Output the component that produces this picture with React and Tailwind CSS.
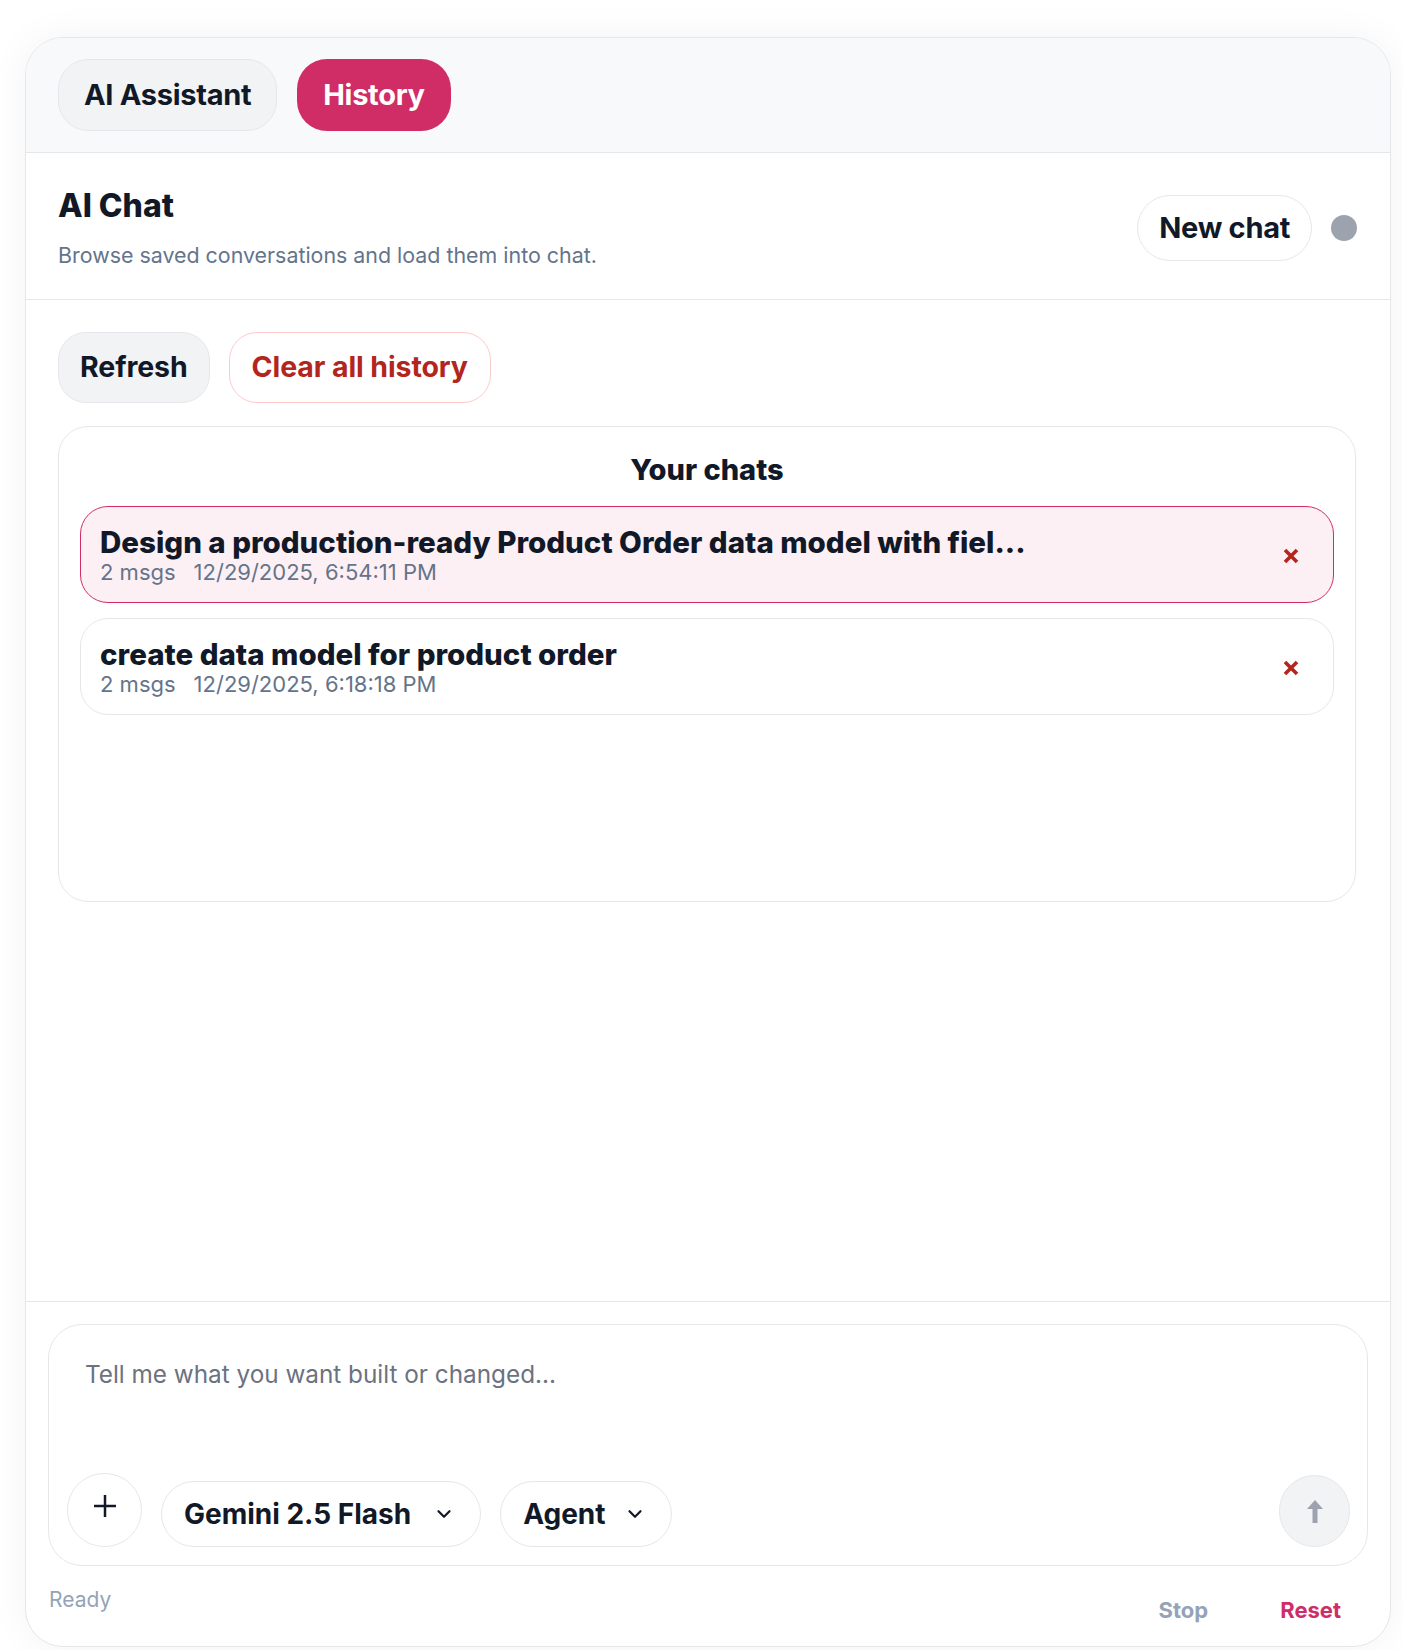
import React from "react";
import { ChevronDown } from "lucide-react";

const chats = [
  {
    title: "Design a production-ready Product Order data model with fiel...",
    count: "2 msgs",
    date: "12/29/2025, 6:54:11 PM",
    active: true,
  },
  {
    title: "create data model for product order",
    count: "2 msgs",
    date: "12/29/2025, 6:18:18 PM",
    active: false,
  },
];

const CloseIcon = () => (
  <svg width="18" height="18" viewBox="0 0 18 18" className="text-[#b3261e]">
    <path d="M3 3 15 15M15 3 3 15" stroke="currentColor" strokeWidth="3.6" strokeLinecap="butt" />
  </svg>
);

const ChatRow = ({ chat }) => (
  <div
    className={`flex items-center justify-between rounded-[28px] border pl-[19px] pr-[33px] pt-[18px] pb-[16px] ${
      chat.active ? "border-[#d02d66] bg-[#fdf0f4]" : "border-[#e5e7eb] bg-white"
    }`}
  >
    <div className="flex flex-col">
      <span className="text-[29.5px] leading-[34px] font-extrabold text-[#111827]">
        {chat.title}
      </span>
      <div className="flex gap-x-[18px] text-[22px] leading-[27px] text-[#64748b]">
        <span>{chat.count}</span>
        <span>{chat.date}</span>
      </div>
    </div>
    <button className="flex items-center justify-center">
      <CloseIcon />
    </button>
  </div>
);

export default function App() {
  return (
    <div
      className="min-h-[1650px] bg-white pt-[37px] pl-[25px]"
      style={{ fontFamily: "Inter, 'Noto Sans', sans-serif" }}
    >
      <div className="flex h-[1610px] w-[1366px] flex-col overflow-hidden rounded-[38px] border border-[#e5e7eb] bg-white shadow-[0_0_40px_rgba(0,0,0,0.05)]">
        {/* tabs */}
        <div className="flex h-[115px] shrink-0 items-center gap-x-[20px] border-b border-[#e5e7eb] bg-[#f8f9fb] px-[32px]">
          <button className="h-[72px] rounded-[30px] border border-[#e5e7eb] bg-[#f2f3f5] px-[25px] text-[29px] font-bold tracking-[-0.3px] text-[#111827]">
            AI Assistant
          </button>
          <button className="h-[72px] rounded-[30px] bg-[#d02d66] px-[26px] text-[29px] font-bold tracking-[-0.3px] text-white">
            History
          </button>
        </div>

        {/* title */}
        <div className="flex shrink-0 items-center justify-between border-b border-[#e5e7eb] pl-[32px] pr-[33px] pt-[33px] pb-[29px]">
          <div className="flex flex-col">
            <h1 className="text-[32px] leading-[40px] font-extrabold text-[#111827]">AI Chat</h1>
            <p className="mt-[14px] text-[21.4px] leading-[30px] text-[#64748b]">
              Browse saved conversations and load them into chat.
            </p>
          </div>
          <div className="flex items-center gap-x-[19px]">
            <button className="h-[66px] rounded-full border border-[#e5e7eb] bg-white px-[21px] text-[29px] font-bold tracking-[-0.3px] text-[#111827]">
              New chat
            </button>
            <span className="h-[26px] w-[26px] rounded-full bg-[#9ca3af]" />
          </div>
        </div>

        {/* history */}
        <div className="flex flex-1 flex-col border-b border-[#e5e7eb] pl-[32px] pr-[34px] pt-[32px]">
          <div className="flex gap-x-[19px]">
            <button className="h-[71px] rounded-[28px] border border-[#e5e7eb] bg-[#f2f3f5] px-[21px] text-[28.5px] font-bold tracking-[-0.1px] text-[#111827]">
              Refresh
            </button>
            <button className="h-[71px] rounded-[28px] border border-[#fecaca] bg-white px-[22px] text-[28.5px] font-bold tracking-[-0.1px] text-[#b3261e]">
              Clear all history
            </button>
          </div>

          <div className="mt-[23px] flex h-[476px] flex-col rounded-[30px] border border-[#e5e7eb] bg-white px-[21px] pt-[25px]">
            <h2 className="text-center text-[29px] leading-[36px] font-extrabold text-[#111827]">Your chats</h2>
            <div className="mt-[18px] flex flex-col gap-y-[15px]">
              {chats.map((chat, i) => (
                <ChatRow key={i} chat={chat} />
              ))}
            </div>
          </div>
        </div>

        {/* composer */}
        <div className="flex shrink-0 flex-col px-[22px] pt-[22px] pb-[22px]">
          <div className="flex flex-col rounded-[34px] border border-[#e5e7eb] bg-white pl-[18px] pr-[17px] pb-[18px]">
            <textarea
              className="mt-[33px] h-[115px] resize-none pl-[18px] text-[24.3px] leading-[32px] text-[#111827] outline-none placeholder:text-[#6b7280]"
              placeholder="Tell me what you want built or changed..."
            />
            <div className="flex items-end justify-between">
              <div className="flex items-end gap-x-[19px]">
                <button className="flex h-[74px] w-[75px] items-center justify-center rounded-full border border-[#e5e7eb] bg-white">
                  <svg width="22" height="22" viewBox="0 0 22 22" className="-mt-[8px] text-[#111827]">
                    <path d="M0 11h22M11 0v22" stroke="currentColor" strokeWidth="2.5" />
                  </svg>
                </button>
                <button className="flex h-[66px] items-center gap-x-[22px] rounded-full border border-[#e5e7eb] bg-white pl-[22px] pr-[25px] text-[28px] font-bold text-[#111827]">
                  Gemini 2.5 Flash
                  <ChevronDown size={22} strokeWidth={2.4} />
                </button>
                <button className="flex h-[66px] items-center gap-x-[18px] rounded-full border border-[#e5e7eb] bg-white pl-[22px] pr-[25px] text-[28px] font-bold text-[#111827]">
                  Agent
                  <ChevronDown size={22} strokeWidth={2.4} />
                </button>
              </div>
              <button className="flex h-[72px] w-[71px] items-center justify-center rounded-full border border-[#e5e7eb] bg-[#f2f3f5]">
                <svg width="16" height="23" viewBox="0 0 16 23" className="text-[#9ca3af]">
                  <path d="M8 0 16 9H10.5V23H5.5V9H0Z" fill="currentColor" />
                </svg>
              </button>
            </div>
          </div>

          <div className="mt-[20px] flex items-start justify-between pl-[1px] pr-[27px]">
            <span className="text-[21px] leading-[28px] text-[#94a3b8]">Ready</span>
            <div className="mt-[10px] flex gap-x-[72px]">
              <button className="text-[22px] leading-[28px] font-bold text-[#94a3b8]">Stop</button>
              <button className="text-[22px] leading-[28px] font-bold text-[#d02d66]">Reset</button>
            </div>
          </div>
        </div>
      </div>
    </div>
  );
}
